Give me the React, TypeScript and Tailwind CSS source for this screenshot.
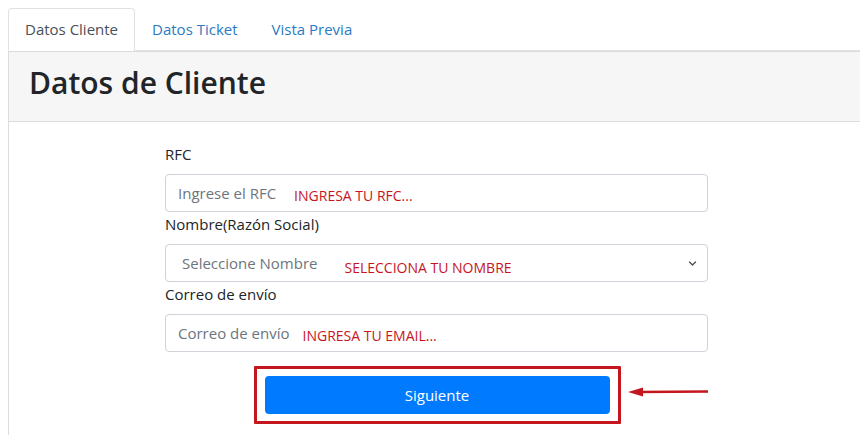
import React from "react";

const font = { fontFamily: '"Open Sans", "Noto Sans", sans-serif' };

function Field({ label, placeholder, note, noteClass, select }: { label: string; placeholder: string; note: string; noteClass: string; select?: boolean }) {
  return (
    <div>
      <div className="mb-2 h-6 text-[15px] leading-6 text-[#212529]">{label}</div>
      <div className="flex h-[38px] items-center rounded-[4px] border border-[#ced4da] bg-white pr-3">
        <span className={`${select ? "pl-4" : "pl-3"} text-[15px] text-[#6c757d]`}>{placeholder}</span>
        <span className={`${noteClass} text-[14px] text-[#c8141e]`}>{note}</span>
        {select && (
          <svg className="ml-auto mr-[-2px]" width="9" height="7" viewBox="0 0 9 7" fill="none">
            <path d="M1.5 2 L4.5 5 L7.5 2" stroke="#495057" strokeWidth="1.4" strokeLinecap="round" strokeLinejoin="round" />
          </svg>
        )}
      </div>
    </div>
  );
}

export default function App() {
  return (
    <div className="h-[435px] w-[860px] overflow-hidden bg-white pl-2 pt-2" style={font}>
      <ul className="flex border-b border-[#dee2e6]">
        <li className="-mb-px rounded-t-[4px] border border-[#dee2e6] border-b-white bg-white px-4 py-2 text-[15px] leading-6 text-[#495057]">
          Datos Cliente
        </li>
        <li className="border border-transparent px-4 py-2 text-[15px] leading-6 text-[#2a7bc4]">Datos Ticket</li>
        <li className="border border-transparent px-4 py-2 text-[15px] leading-6 text-[#2a7bc4]">Vista Previa</li>
      </ul>
      <div className="border border-r-0 border-[#dcdcdc]">
        <div className="border-b border-[#dcdcdc] bg-[#f6f6f6] px-5 pb-[19px] pt-3">
          <h2 className="text-[30px] font-semibold leading-[38px] text-[#212529]">Datos de Cliente</h2>
        </div>
        <div className="pb-10 pl-[156px] pt-5">
          <div className="w-[543px]">
            <Field label="RFC" placeholder="Ingrese el RFC" note="INGRESA TU RFC..." noteClass="ml-[18px] mt-[4px]" />
            <Field label="Nombre(Razón Social)" placeholder="Seleccione Nombre" note="SELECCIONA TU NOMBRE" noteClass="ml-[27px] mt-[8px]" select />
            <Field label="Correo de envío" placeholder="Correo de envío" note="INGRESA TU EMAIL..." noteClass="ml-[13px] mt-[4px]" />
            <div className="mt-[14px] flex justify-center">
              <div className="relative ml-[1px] rounded-[1px] border-[3px] border-[#c4161c] px-[8px] py-[7px]">
                <button className="h-[38px] w-[345px] rounded-[4px] bg-[#007bff] text-[15px] text-white">Siguiente</button>
                <svg className="absolute left-[371px] top-[17px]" width="82" height="12" viewBox="0 0 82 12">
                  <line x1="10" y1="6" x2="80" y2="5.5" stroke="#c4161c" strokeWidth="2.4" />
                  <path d="M0 6 L15 1.5 L15 10.5 Z" fill="#c4161c" />
                </svg>
              </div>
            </div>
          </div>
        </div>
      </div>
    </div>
  );
}
